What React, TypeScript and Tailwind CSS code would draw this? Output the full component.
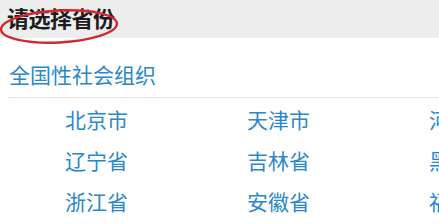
const FONT = { fontFamily: '"Noto Sans CJK SC", "Microsoft YaHei", sans-serif' };

const rows = [
  ['北京市', '天津市', '河北省'],
  ['辽宁省', '吉林省', '黑龙江省'],
  ['浙江省', '安徽省', '福建省'],
];

export default function App() {
  return (
    <div className="relative w-[439px] h-[224px] overflow-hidden bg-white" style={FONT}>
      <div className="h-[38px] bg-[#ededed] flex items-center pl-[7px]">
        <h2 className="text-[22px] font-bold text-[#1c1c1c] leading-none -mt-[4px] tracking-[-0.5px]">请选择省份</h2>
      </div>

      <div className="ml-2 border-b border-[#e6e6e6] h-[60px] flex items-center">
        <a className="text-[21px] text-[#2a88c8] leading-none pt-[14px] pl-[1px]">全国性社会组织</a>
      </div>

      <div className="pl-[65px] pt-[1px]">
        {rows.map((r, i) => (
          <div key={i} className="grid grid-cols-[182px_182px_182px] h-[41px] items-center">
            {r.map((name) => (
              <a key={name} className="text-[21px] text-[#2a88c8] leading-none whitespace-nowrap">
                {name}
              </a>
            ))}
          </div>
        ))}
      </div>

      <svg className="absolute left-0 top-0" width="122" height="46" viewBox="0 0 122 46">
        <ellipse
          cx="59"
          cy="26.5"
          rx="58"
          ry="16"
          fill="none"
          stroke="#d5282d"
          strokeWidth="2.4"
          transform="rotate(-3 59 26.5)"
        />
      </svg>
    </div>
  );
}
